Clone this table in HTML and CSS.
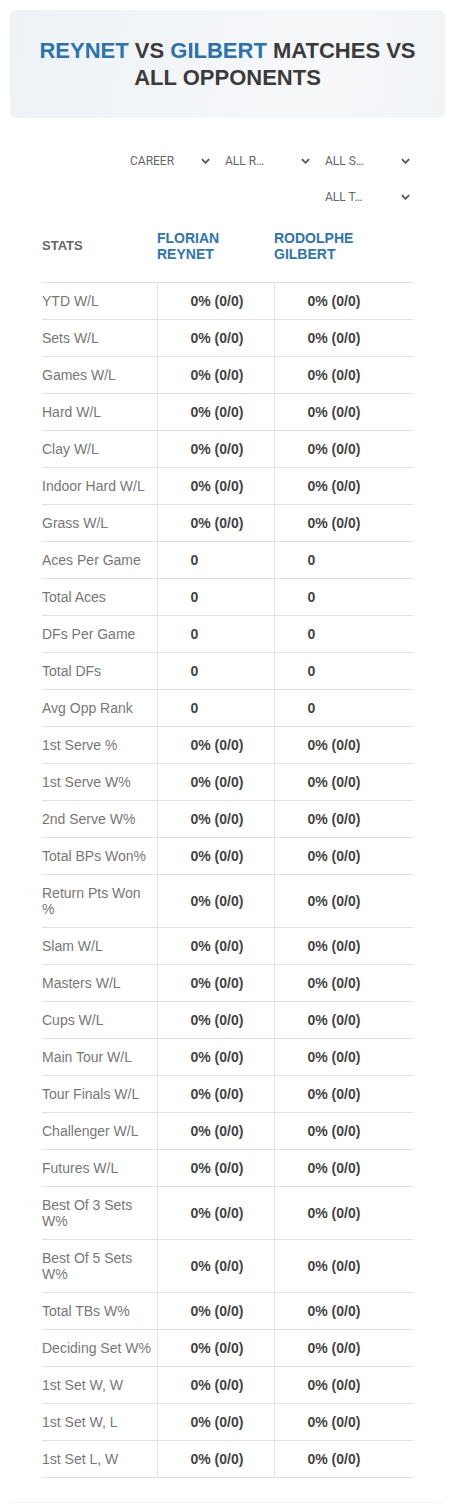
FILE: index.html
```html
<!DOCTYPE html>
<html lang="en">
<head>
    <meta charset="UTF-8">
    <meta name="viewport" content="width=device-width, initial-scale=1.0">
    <title>Reynet vs Gilbert</title>
<link rel="stylesheet" href="styles.css">
</head>
<body>
    <div class="title-card">
        <h1><span class="player">Reynet</span> vs <span class="player">Gilbert</span> matches vs all opponents</h1>
    </div>

    <div class="content-card">
        <div class="filters">
            <div class="dropdown"><span class="dropdown-text">CAREER</span><svg class="chevron" viewBox="0 0 10 6"><path d="M1 1l4 4 4-4" /></svg></div>
            <div class="dropdown"><span class="dropdown-text">ALL R…</span><svg class="chevron" viewBox="0 0 10 6"><path d="M1 1l4 4 4-4" /></svg></div>
            <div class="dropdown"><span class="dropdown-text">ALL S…</span><svg class="chevron" viewBox="0 0 10 6"><path d="M1 1l4 4 4-4" /></svg></div>
            <div class="dropdown"><span class="dropdown-text">ALL T…</span><svg class="chevron" viewBox="0 0 10 6"><path d="M1 1l4 4 4-4" /></svg></div>
        </div>

        <table class="stats-table">
            <colgroup>
                <col class="col-label">
                <col class="col-p1">
                <col class="col-p2">
            </colgroup>
            <thead>
                <tr>
                    <th class="stats-head">STATS</th>
                    <th class="name-head">FLORIAN REYNET</th>
                    <th class="name-head">RODOLPHE GILBERT</th>
                </tr>
            </thead>
            <tbody id="stats-body">
                <!-- rows get added by the script below -->
            </tbody>
        </table>
    </div>

    <script>
        const rows = [
            ['YTD W/L', '0% (0/0)'],
            ['Sets W/L', '0% (0/0)'],
            ['Games W/L', '0% (0/0)'],
            ['Hard W/L', '0% (0/0)'],
            ['Clay W/L', '0% (0/0)'],
            ['Indoor Hard W/L', '0% (0/0)'],
            ['Grass W/L', '0% (0/0)'],
            ['Aces Per Game', '0'],
            ['Total Aces', '0'],
            ['DFs Per Game', '0'],
            ['Total DFs', '0'],
            ['Avg Opp Rank', '0'],
            ['1st Serve %', '0% (0/0)'],
            ['1st Serve W%', '0% (0/0)'],
            ['2nd Serve W%', '0% (0/0)'],
            ['Total BPs Won%', '0% (0/0)'],
            ['Return Pts Won %', '0% (0/0)'],
            ['Slam W/L', '0% (0/0)'],
            ['Masters W/L', '0% (0/0)'],
            ['Cups W/L', '0% (0/0)'],
            ['Main Tour W/L', '0% (0/0)'],
            ['Tour Finals W/L', '0% (0/0)'],
            ['Challenger W/L', '0% (0/0)'],
            ['Futures W/L', '0% (0/0)'],
            ['Best Of 3 Sets W%', '0% (0/0)'],
            ['Best Of 5 Sets W%', '0% (0/0)'],
            ['Total TBs W%', '0% (0/0)'],
            ['Deciding Set W%', '0% (0/0)'],
            ['1st Set W, W', '0% (0/0)'],
            ['1st Set W, L', '0% (0/0)'],
            ['1st Set L, W', '0% (0/0)']
        ];

        const body = document.getElementById('stats-body');
        rows.forEach(([label, value]) => {
            const tr = document.createElement('tr');
            tr.innerHTML = `
                <td class="stat-label">${label}</td>
                <td class="stat-value">${value}</td>
                <td class="stat-value">${value}</td>
            `;
            body.appendChild(tr);
        });
    </script>
</body>
</html>
```

FILE: styles.css
```css
body {
    font-family: "Liberation Sans", Arial, sans-serif;
    margin: 0;
    padding: 10px;
    background: #fff;
}
.title-card {
    background: linear-gradient(100deg, #eef2f6 0%, #f6f8fa 70%, #f1f4f7 100%);
    border-radius: 6px;
    padding: 27px 20px;
}
.title-card h1 {
    margin: 0;
    text-align: center;
    text-transform: uppercase;
    font-size: 22px;
    line-height: 27px;
    font-weight: bold;
    color: #3b3b3b;
}
.title-card .player {
    color: #2a72b0;
}
.content-card {
    margin-top: 10px;
    padding: 18px 32px 24px;
    border-radius: 6px;
    box-shadow: 0 1px 2px rgba(0, 0, 0, 0.06);
}
.filters {
    display: flex;
    flex-wrap: wrap;
    justify-content: flex-end;
    gap: 6px 5px;
}
.dropdown {
    width: 95px;
    height: 30px;
    box-sizing: border-box;
    padding: 0 3px 0 7px;
    display: flex;
    align-items: center;
    justify-content: space-between;
    font-family: Roboto, "Open Sans", sans-serif;
    font-size: 12px;
    color: #666;
}
.dropdown:first-child {
    padding-left: 12px;
}
.dropdown-text {
    white-space: nowrap;
}
.chevron {
    width: 9px;
    height: 6px;
    fill: none;
    stroke: #555;
    stroke-width: 2;
}
.stats-table {
    width: 100%;
    border-collapse: collapse;
    table-layout: fixed;
}
.col-label {
    width: 115px;
}
.col-p1 {
    width: 117px;
}
.stats-table th {
    text-align: left;
    font-weight: bold;
    line-height: 16px;
    padding: 18px 0 20px;
    vertical-align: middle;
}
.stats-head {
    font-size: 13px;
    color: #666;
}
.name-head {
    font-size: 14px;
    color: #2e74b3;
    padding-right: 30px !important;
}
.stats-table td {
    font-size: 14px;
    line-height: 16px;
    padding: 10px 0;
    border-top: 1px solid #e2e2e2;
    border-bottom: 1px solid #e2e2e2;
    vertical-align: middle;
}
.stat-label {
    color: #777;
}
.stat-value {
    font-weight: bold;
    color: #444;
    padding-left: 33px !important;
    border-left: 1px solid #e2e2e2;
}
```
